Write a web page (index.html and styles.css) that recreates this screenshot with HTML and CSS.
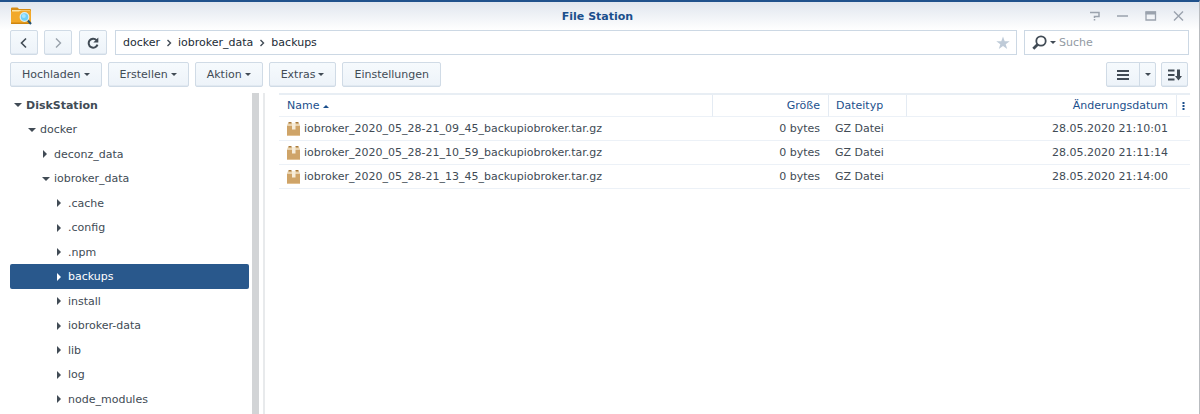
FILE: index.html
```
<!DOCTYPE html>
<html lang="de">
<head>
    <meta charset="UTF-8">
    <meta name="viewport" content="width=device-width, initial-scale=1.0">
    <title>File Station</title>
    <link rel="stylesheet" href="styles.css">
</head>
<body>
    <div class="window">
        <header class="titlebar">
            <svg class="app-icon" width="22" height="18" viewBox="0 0 22 18">
                <path d="M1 1.5Q1 .5 2 .5H7.500L9 2H20Q21 2 21 3V7H1Z" fill="#d98d12"/>
                <path d="M2 3H20V5H2Z" fill="#fbe3a4"/>
                <path d="M1 4.500H9L11 3.500H21V16Q21 17 20 17H2Q1 17 1 16Z" fill="#f2a92a"/>
                <path d="M1 15.500H21V16.500Q21 17 20 17H2Q1 17 1 16.500Z" fill="#cf850f"/>
                <path d="M17.500 13L21 17" stroke="#24506f" stroke-width="2"/>
                <circle cx="14.500" cy="10" r="4.300" fill="#6fd0f7" stroke="#d7eef7" stroke-width="1.200"/>
                <circle cx="13.800" cy="9" r="2" fill="#a9e5fc"/>
            </svg>
            <h1>File Station</h1>
            <div class="window-controls">
                <button type="button" aria-label="Hilfe">
                    <svg width="12" height="12" viewBox="0 0 12 12"><path d="M1 2.500H10V6.500H5.500V8M5.500 9V10.500" fill="none" stroke="#9aa2ad" stroke-width="1.500"/></svg>
                </button>
                <button type="button" aria-label="Minimieren">
                    <svg width="12" height="12" viewBox="0 0 12 12"><path d="M0 6H11" stroke="#9aa2ad" stroke-width="1.500"/></svg>
                </button>
                <button type="button" aria-label="Maximieren">
                    <svg width="12" height="12" viewBox="0 0 12 12"><path d="M1 2H10.500V10H1Z" fill="none" stroke="#9aa2ad" stroke-width="1.300"/><path d="M.5 3H11" stroke="#9aa2ad" stroke-width="3"/></svg>
                </button>
                <button type="button" aria-label="Schließen">
                    <svg width="12" height="12" viewBox="0 0 12 12"><path d="M1 1.500L10 10.500M10 1.500L1 10.500" stroke="#9aa2ad" stroke-width="1.400"/></svg>
                </button>
            </div>
        </header>

        <nav class="navbar">
            <button type="button" class="btn btn-nav" aria-label="Zurück">
                <svg width="12" height="12" viewBox="0 0 12 12"><path d="M8 1.500L3.500 6L8 10.500" fill="none" stroke="#414b55" stroke-width="1.600"/></svg>
            </button>
            <button type="button" class="btn btn-nav" aria-label="Vor">
                <svg width="12" height="12" viewBox="0 0 12 12"><path d="M4 1.500L8.500 6L4 10.500" fill="none" stroke="#98a1aa" stroke-width="1.400"/></svg>
            </button>
            <button type="button" class="btn btn-nav btn-reload" aria-label="Aktualisieren">
                <svg width="12" height="12" viewBox="0 0 12 12"><path d="M9.500 3.100A4.500 4.500 0 1 0 10.500 7.600" fill="none" stroke="#414b55" stroke-width="2"/><path d="M11.300 .5V5.500H6.300Z" fill="#414b55"/></svg>
            </button>
            <div class="path">
                <a href="#">docker</a>
                <svg width="6" height="8" viewBox="0 0 6 8"><path d="M1.500 1L4.500 4L1.500 7" fill="none" stroke="#414b55" stroke-width="1.400"/></svg>
                <a href="#">iobroker_data</a>
                <svg width="6" height="8" viewBox="0 0 6 8"><path d="M1.500 1L4.500 4L1.500 7" fill="none" stroke="#414b55" stroke-width="1.400"/></svg>
                <a href="#">backups</a>
                <button type="button" class="favorite" aria-label="Favorit">
                    <svg width="14" height="14" viewBox="0 0 14 14"><path d="M7 .5L8.700 5.200H13.700L9.700 8.200L11.200 13L7 10.100L2.800 13L4.300 8.200L.3 5.200H5.300Z" fill="#bfcbd8"/></svg>
                </button>
            </div>
            <div class="search">
                <svg width="15" height="15" viewBox="0 0 15 15"><circle cx="9" cy="6" r="4.700" fill="none" stroke="#414b55" stroke-width="1.800"/><path d="M5.600 9.400L1.300 13.700" stroke="#414b55" stroke-width="2.800"/></svg>
                <span class="caret"></span>
                <input type="text" placeholder="Suche" aria-label="Suche">
            </div>
        </nav>

        <div class="toolbar">
            <button type="button" class="btn">Hochladen <span class="caret"></span></button>
            <button type="button" class="btn">Erstellen <span class="caret"></span></button>
            <button type="button" class="btn">Aktion <span class="caret"></span></button>
            <button type="button" class="btn">Extras <span class="caret"></span></button>
            <button type="button" class="btn">Einstellungen</button>
            <div class="view-buttons">
                <button type="button" class="btn btn-view" aria-label="Listenansicht">
                    <svg width="12" height="10" viewBox="0 0 12 10"><path d="M0 1H12M0 5H12M0 9H12" stroke="#414b55" stroke-width="1.800"/></svg>
                </button>
                <button type="button" class="btn btn-view-menu" aria-label="Ansicht wählen"><span class="caret"></span></button>
                <button type="button" class="btn btn-sort" aria-label="Sortieren">
                    <svg width="14" height="12" viewBox="0 0 14 12"><path d="M0 1.500H6.500M0 6H6.500M0 10.500H6.500" stroke="#414b55" stroke-width="1.800"/><path d="M9 .5H12V7H14L10.500 11.500L7 7H9Z" fill="#414b55"/></svg>
                </button>
            </div>
        </div>

        <main class="content">
            <aside class="sidebar">
                <ul class="tree">
                    <li class="root open">DiskStation</li>
                    <li class="level-1 open">docker</li>
                    <li class="level-2">deconz_data</li>
                    <li class="level-2 open">iobroker_data</li>
                    <li class="level-3">.cache</li>
                    <li class="level-3">.config</li>
                    <li class="level-3">.npm</li>
                    <li class="level-3 selected">backups</li>
                    <li class="level-3">install</li>
                    <li class="level-3">iobroker-data</li>
                    <li class="level-3">lib</li>
                    <li class="level-3">log</li>
                    <li class="level-3">node_modules</li>
                </ul>
                <div class="scrollbar"></div>
            </aside>

            <section class="files">
                <table>
                    <thead>
                        <tr>
                            <th class="name">Name <span class="sort-up"></span></th>
                            <th class="size">Größe</th>
                            <th class="type">Dateityp</th>
                            <th class="date">Änderungsdatum</th>
                            <th class="more">
                                <button type="button" aria-label="Spalten">
                                    <svg width="3" height="10" viewBox="0 0 3 10"><path d="M.5 1H2.500V3H.5ZM.5 4H2.500V6H.5ZM.5 7H2.500V9H.5Z" fill="#1b4f8c"/></svg>
                                </button>
                            </th>
                        </tr>
                    </thead>
                    <tbody>
                        <tr>
                            <td class="name"><div class="file"><svg class="archive" width="13" height="14" viewBox="0 0 13 14"><use href="#archive"/></svg>iobroker_2020_05_28-21_09_45_backupiobroker.tar.gz</div></td>
                            <td class="size">0 bytes</td>
                            <td class="type">GZ Datei</td>
                            <td class="date">28.05.2020 21:10:01</td>
                            <td class="more"></td>
                        </tr>
                        <tr>
                            <td class="name"><div class="file"><svg class="archive" width="13" height="14" viewBox="0 0 13 14"><use href="#archive"/></svg>iobroker_2020_05_28-21_10_59_backupiobroker.tar.gz</div></td>
                            <td class="size">0 bytes</td>
                            <td class="type">GZ Datei</td>
                            <td class="date">28.05.2020 21:11:14</td>
                            <td class="more"></td>
                        </tr>
                        <tr>
                            <td class="name"><div class="file"><svg class="archive" width="13" height="14" viewBox="0 0 13 14"><use href="#archive"/></svg>iobroker_2020_05_28-21_13_45_backupiobroker.tar.gz</div></td>
                            <td class="size">0 bytes</td>
                            <td class="type">GZ Datei</td>
                            <td class="date">28.05.2020 21:14:00</td>
                            <td class="more"></td>
                        </tr>
                    </tbody>
                </table>
            </section>
        </main>
    </div>

    <svg width="0" height="0" class="symbols">
        <symbol id="archive" viewBox="0 0 13 14">
            <path d="M0 3.500H13V13Q13 14 12 14H1Q0 14 0 13Z" fill="#cfa468"/>
            <path d="M1 1H12L13 3.500H0Z" fill="#ead3ad"/>
            <path d="M1.500 0H4.500V1.500H1.500ZM8.500 0H11.500V1.500H8.500Z" fill="#a97b3b"/>
            <path d="M5 1H8.500V7.500H5Z" fill="#f6ecd9"/>
            <path d="M0 13H13Q13 14 12 14H1Q0 14 0 13Z" fill="#e2c193"/>
        </symbol>
    </svg>
</body>
</html>
```
FILE: styles.css
```
* {
    box-sizing: border-box;
    margin: 0;
    padding: 0;
}

body {
    background-color: #fff;
    color: #414b55;
    font-family: Verdana, "DejaVu Sans", sans-serif;
    font-size: 11px;
    overflow: hidden;
}

button {
    border: none;
    background: none;
    color: inherit;
    font: inherit;
    cursor: pointer;
}

svg {
    display: block;
    flex-shrink: 0;
}

.symbols {
    position: absolute;
}

.window {
    display: flex;
    flex-direction: column;
    height: 100vh;
    border-top: 2px solid #20528c;
    border-right: 1px solid #b9bcc0;
    background: linear-gradient(#e0e6ee, #fff 28px);
}

/* title bar */
.titlebar {
    display: grid;
    grid-template-columns: 1fr auto 1fr;
    align-items: center;
    height: 28px;
    padding: 0 14px 0 10px;
}

h1 {
    color: #1b4f8c;
    font-size: 11px;
    font-weight: bold;
}

.window-controls {
    display: flex;
    justify-content: flex-end;
    gap: 16px;
}

/* buttons */
.btn {
    display: flex;
    align-items: center;
    justify-content: center;
    gap: 3px;
    height: 25px;
    padding: 0 11px;
    border: 1px solid #d0dbe6;
    border-radius: 2px;
    background: linear-gradient(#f6fafd, #edf3f9);
    box-shadow: inset 0 -1px #e1e9f1;
}

.caret {
    border: 3px solid transparent;
    border-top-color: #414b55;
    border-bottom: none;
}

/* path and search */
.navbar {
    display: flex;
    gap: 6px;
    padding: 0 10px;
}

.btn-nav {
    width: 28px;
    padding: 0;
}

.btn-reload {
    margin-left: 1px;
}

.path,
.search {
    display: flex;
    align-items: center;
    height: 25px;
    border: 1px solid #ccd8e4;
    background-color: #fff;
}

.path {
    flex: 1;
    gap: 6px;
    margin-left: 2px;
    padding: 0 6px 0 7px;
}

.path a {
    color: #222c36;
    text-decoration: none;
}

.favorite {
    margin-left: auto;
}

.search {
    width: 165px;
    gap: 3px;
    margin-left: 1px;
    padding-left: 7px;
}

.search input {
    flex: 1;
    min-width: 0;
    border: none;
    outline: none;
    background: none;
    font: inherit;
}

.search input::placeholder {
    color: #929aa3;
}

/* toolbar */
.toolbar {
    display: flex;
    gap: 6px;
    padding: 7px 11px 6px 10px;
}

.view-buttons {
    display: flex;
    margin-left: auto;
}

.btn-view {
    width: 34px;
    border-radius: 2px 0 0 2px;
}

.btn-view-menu {
    width: 17px;
    margin-left: -1px;
    padding: 0;
    border-radius: 0 2px 2px 0;
}

.btn-sort {
    width: 27px;
    margin-left: 5px;
    padding: 0;
}

/* folder tree */
.content {
    display: flex;
    flex: 1;
    min-height: 0;
}

.sidebar {
    display: flex;
    width: 265px;
    padding-left: 10px;
    border-right: 2px solid #e8eaec;
}

.tree {
    flex: 1;
    list-style: none;
    overflow: hidden;
}

.tree li {
    display: flex;
    align-items: center;
    gap: 4px;
    height: 24px;
}

.tree li:nth-child(even) {
    height: 25px;
}

.tree li::before {
    content: "";
    margin: 0 3px 0 1px;
    border: 4px solid transparent;
    border-left-color: #414b55;
    border-right: none;
}

.tree .open::before {
    margin: 0;
    border: 4px solid transparent;
    border-top-color: #414b55;
    border-bottom: none;
}

.tree .root {
    padding-left: 4px;
    font-weight: bold;
}

.tree .level-1 {
    padding-left: 18px;
}

.tree .level-2 {
    padding-left: 32px;
}

.tree .level-3 {
    padding-left: 46px;
}

.tree .selected {
    border-radius: 2px;
    background-color: #29588c;
    color: #fff;
}

.tree .selected::before {
    border-left-color: #fff;
}

.scrollbar {
    width: 7px;
    margin: 0 4px 0 3px;
    background-color: #d2d4d6;
}

/* file list */
.files {
    flex: 1;
    padding: 0 9px 0 14px;
}

table {
    width: 100%;
    border-collapse: separate;
    border-spacing: 0;
    border-top: 2px solid #e8eef4;
    table-layout: fixed;
}

th,
td {
    height: 24px;
    padding: 0 8px;
    border-bottom: 1px solid #ecf1f7;
    font-weight: normal;
    text-align: left;
    white-space: nowrap;
}

thead th {
    height: 22px;
    color: #1b4f8c;
}

thead th + th {
    border-left: 1px solid #e4ebf3;
}

.size {
    width: 116px;
    text-align: right;
}

.type {
    width: 78px;
    padding: 0 7px;
}

.date {
    width: 270px;
    text-align: right;
}

.more {
    width: 14px;
    padding: 0;
}

.more button {
    display: block;
    margin: 0 auto;
}

.sort-up {
    display: inline-block;
    border: 3px solid transparent;
    border-bottom-color: #1b4f8c;
    border-top: none;
    vertical-align: middle;
}

.file {
    display: flex;
    align-items: center;
    gap: 4px;
}
```
